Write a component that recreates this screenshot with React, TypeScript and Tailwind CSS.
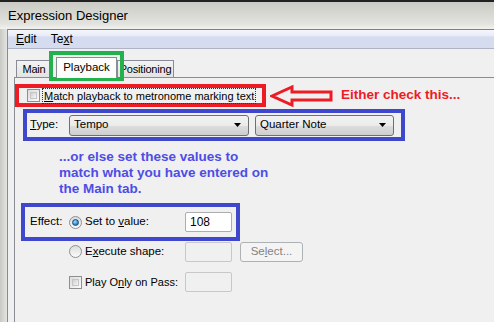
import React from 'react';

const font = "font-['Liberation_Sans',Arial,sans-serif]";

const Dropdown = ({ value, width }: { value: string; width: string }) => (
  <div
    className={`${width} flex h-[21px] items-center justify-between rounded-[3px] border border-[#707070] bg-[linear-gradient(#f2f2f2,#ebebeb_50%,#dddddd_51%,#cfcfcf)] pr-[7px] pl-[4px] text-[11.5px] text-black`}
  >
    <span>{value}</span>
    <svg width="7" height="4" viewBox="0 0 7 4">
      <path d="M0 0h7L3.5 4z" fill="#000" />
    </svg>
  </div>
);

const TextBox = ({ value, className = '' }: { value?: string; className?: string }) => (
  <div
    className={`flex h-[20px] w-[47px] shrink-0 items-center rounded-[2px] border px-[4px] text-[12px] ${
      value ? 'border-[#abadb3] bg-white' : 'border-[#c8c8c8] bg-[#f0f0f0]'
    } ${className}`}
  >
    {value}
  </div>
);

const Radio = ({ checked }: { checked?: boolean }) => (
  <div className="flex h-[13px] w-[13px] shrink-0 items-center justify-center rounded-full border border-[#8e8f8f] bg-[linear-gradient(#dcdcdc,#fbfbfb)]">
    {checked && (
      <div className="h-[7px] w-[7px] rounded-full border border-[#1a4f78] bg-[radial-gradient(circle_at_40%_35%,#a4e1ff,#2b8ad4_60%,#1c5788)]" />
    )}
  </div>
);

const CheckBox = () => (
  <div className="h-[13px] w-[13px] shrink-0 border border-[#8e8f8f] bg-[linear-gradient(135deg,#dcdcdc,#fbfbfb)] p-[2px]">
    <div className="h-full w-full border border-[#c5c5c5] bg-[linear-gradient(135deg,#cbcfd5,#f6f6f6)]" />
  </div>
);

const Tab = ({ label, width, active }: { label: string; width: string; active?: boolean }) => (
  <div
    className={
      active
        ? `relative z-10 -mb-px flex h-[21px] ${width} items-center justify-center border border-b-0 border-[#898c95] bg-[#fcfcfc] text-[11.5px]`
        : `flex h-[17px] ${width} items-center justify-center border border-b-0 border-[#898c95] bg-[linear-gradient(#f3f3f3,#e3e3e3)] text-[11px] tracking-[-0.2px]`
    }
  >
    {label}
  </div>
);

export default function App() {
  return (
    <div className={`${font} relative flex h-[322px] w-[494px] flex-col overflow-hidden bg-[#f0f0f0] text-black`}>
      {/* title bar */}
      <div className="flex h-[29px] shrink-0 items-center border-t-2 border-[#222] bg-[linear-gradient(#c9cac4,#d6d7d1_40%,#e2e3de_80%,#f2f2ee)] pl-[8px] text-[13px]">
        Expression Designer
      </div>

      <div className="flex flex-1">
        {/* window frame */}
        <div className="w-[8px] shrink-0 border-r border-[#8a8a8a] bg-[linear-gradient(90deg,#c8c9c4,#e4e4e0)]" />

        <div className="flex flex-1 flex-col">
          {/* menu bar */}
          <div className="flex h-[20px] items-center gap-[14px] border-t border-b border-t-[#808080] border-b-[#aeb3c6] bg-[linear-gradient(#f4f6fc,#e9edf8_30%,#d6dcef_40%,#d6dcef)] pl-[8px] text-[12px]">
            <span>
              <u>E</u>dit
            </span>
            <span>
              Te<u>x</u>t
            </span>
          </div>

          {/* tabs */}
          <div className="flex h-[28px] items-end pl-[8px]">
            <Tab label="Main" width="w-[36px]" />
            <div className="w-[4px]" />
            <Tab label="Playback" width="w-[61px]" active />
            <Tab label="Positioning" width="w-[57px]" />
          </div>

          {/* tab panel */}
          <div className="ml-[6px] flex flex-1 flex-col border-t border-l border-[#898c95] pt-[6px]">
            {/* red annotation row */}
            <div className="flex items-center">
              <div className="flex h-[23px] w-[251px] items-center border-4 border-[#ed1c24] pl-[8px]">
                <CheckBox />
                <span className="ml-[2px] border border-dotted border-[#333] px-[1px] text-[11px] leading-[14px] whitespace-nowrap">
                  <u>M</u>atch playback to metronome marking text
                </span>
              </div>
              <svg width="64" height="22" viewBox="0 0 64 22" className="ml-[4px]">
                <path
                  d="M2 11 L22 2 L22 7 L61 7 L61 15 L22 15 L22 20 Z"
                  fill="none"
                  stroke="#ed1c24"
                  strokeWidth="3"
                  strokeLinejoin="miter"
                />
              </svg>
              <span className="ml-[7px] text-[13.5px] font-bold text-[#ed1c24]">Either check this...</span>
            </div>

            {/* type row */}
            <div className="mt-[2px] ml-[8px] flex h-[32px] w-[382px] items-center border-4 border-[#3f48cc] pl-[3px]">
              <span className="w-[39px] text-[11.5px]">
                <u>T</u>ype:
              </span>
              <Dropdown value="Tempo" width="w-[180px]" />
              <div className="w-[6px]" />
              <Dropdown value="Quarter Note" width="w-[139px]" />
            </div>

            <div className="mt-[8px] ml-[44px] text-[13.5px] leading-[16px] font-bold text-[#4d4de6]">
              ...or else set these values to
              <br />
              match what you have entered on
              <br />
              the Main tab.
            </div>

            {/* effect */}
            <div className="mt-[6px] ml-[6px] flex h-[38px] w-[219px] items-center border-4 border-[#3f48cc] pl-[5px] text-[11.5px]">
              <span className="w-[39px]">Effect:</span>
              <Radio checked />
              <span className="ml-[3px] w-[100px] whitespace-nowrap">
                Set to <u>v</u>alue:
              </span>
              <TextBox value="108" />
            </div>

            <div className="ml-[54px] flex h-[21px] items-center text-[11.5px]">
              <Radio />
              <span className="ml-[3px] w-[100px] whitespace-nowrap">
                E<u>x</u>ecute shape:
              </span>
              <TextBox />
              <div className="ml-[8px] flex h-[20px] w-[63px] items-center justify-center rounded-[3px] border border-[#adb2b5] bg-[#f4f4f4] text-[11.5px] text-[#838383]">
                Se<u>l</u>ect...
              </div>
            </div>

            <div className="mt-[10px] ml-[54px] flex h-[20px] items-center text-[11px]">
              <CheckBox />
              <span className="ml-[3px] w-[100px] whitespace-nowrap">
                Play O<u>n</u>ly on Pass:
              </span>
              <TextBox />
            </div>
          </div>
        </div>
      </div>

      {/* green annotation around selected tab */}
      <div className="absolute top-[51px] left-[49px] h-[30px] w-[75px] border-4 border-[#22b14c]" />
    </div>
  );
}
